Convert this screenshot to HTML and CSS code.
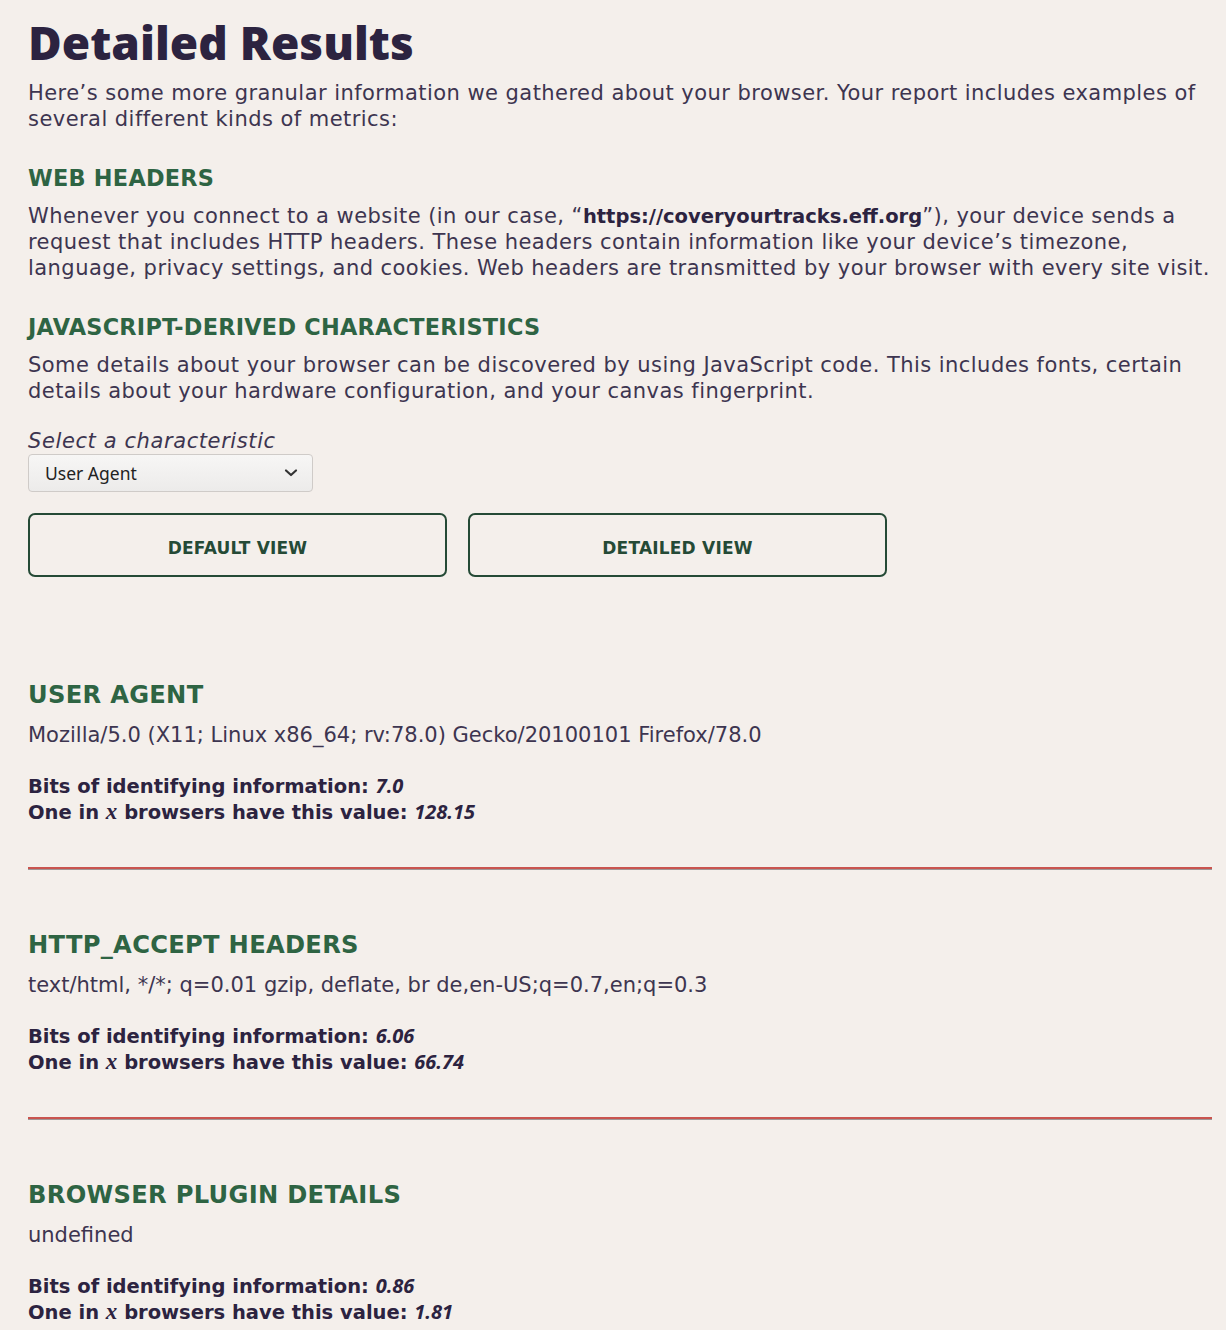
FILE: index.html
```html
<!DOCTYPE html>
<html lang="en">
<head>
<meta charset="utf-8">
<title>Detailed Results</title>
<link rel="stylesheet" href="styles.css">
</head>
<body>
<main class="page">
  <h1 class="title">Detailed Results</h1>
  <p class="text">Here’s some more granular information we gathered about your browser. Your report includes examples of several different kinds of metrics:</p>

  <h2 class="section-title">WEB HEADERS</h2>
  <p class="text">Whenever you connect to a website (in our case, “<strong class="url">https://coveryourtracks.eff.org</strong>”), your device sends a request that includes HTTP headers. These headers contain information like your device’s timezone, language, privacy settings, and cookies. Web headers are transmitted by your browser with every site visit.</p>

  <h2 class="section-title">JAVASCRIPT-DERIVED CHARACTERISTICS</h2>
  <p class="text">Some details about your browser can be discovered by using JavaScript code. This includes fonts, certain details about your hardware configuration, and your canvas fingerprint.</p>

  <label class="select-label" for="char">Select a characteristic</label>
  <div class="select-wrap">
    <select id="char" class="select">
      <option>User Agent</option>
      <option>HTTP_ACCEPT Headers</option>
      <option>Browser Plugin Details</option>
    </select>
    <svg class="chevron" width="14" height="10" viewBox="0 0 14 10"><path d="M2 2.5 L7 7 L12 2.5" fill="none" stroke="#333" stroke-width="2.2" stroke-linecap="round" stroke-linejoin="round"/></svg>
  </div>

  <div class="views">
    <button class="view-btn">DEFAULT VIEW</button>
    <button class="view-btn">DETAILED VIEW</button>
  </div>

  <section class="result">
    <h2 class="result-title">USER AGENT</h2>
    <p class="result-value">Mozilla/5.0 (X11; Linux x86_64; rv:78.0) Gecko/20100101 Firefox/78.0</p>
    <p class="bits">Bits of identifying information: <em>7.0</em><br>One in <span class="x">x</span> browsers have this value: <em>128.15</em></p>
  </section>
  <div class="divider"></div>

  <section class="result">
    <h2 class="result-title">HTTP_ACCEPT HEADERS</h2>
    <p class="result-value">text/html, */*; q=0.01 gzip, deflate, br de,en-US;q=0.7,en;q=0.3</p>
    <p class="bits">Bits of identifying information: <em>6.06</em><br>One in <span class="x">x</span> browsers have this value: <em>66.74</em></p>
  </section>
  <div class="divider"></div>

  <section class="result">
    <h2 class="result-title">BROWSER PLUGIN DETAILS</h2>
    <p class="result-value">undefined</p>
    <p class="bits">Bits of identifying information: <em>0.86</em><br>One in <span class="x">x</span> browsers have this value: <em>1.81</em></p>
  </section>
</main>
</body>
</html>
```

FILE: styles.css
```css
html, body {
  margin: 0;
  padding: 0;
  background: #f4efeb;
}

.page {
  width: 1184px;
  padding: 12px 14px 0 28px;
  font-family: "DejaVu Sans", "Open Sans", sans-serif;
  color: #3d3550;
}

.title {
  margin: 0;
  font-family: "Open Sans", sans-serif;
  font-weight: 800;
  font-size: 46px;
  line-height: 60px;
  color: #2c2340;
}

.text {
  margin: 8px 0 0;
  font-size: 21px;
  line-height: 26px;
  letter-spacing: 0.45px;
}

.url {
  font-weight: 700;
  font-size: 19.5px;
  line-height: 0;
  letter-spacing: 0;
  color: #2c2340;
}

.section-title {
  margin: 31px 0 0;
  font-size: 22.4px;
  line-height: 30px;
  font-weight: 700;
  letter-spacing: 0.25px;
  color: #2e6443;
}

.section-title + .text {
  margin-top: 10px;
}

.select-label {
  display: block;
  margin-top: 24px;
  font-size: 21px;
  line-height: 26px;
  font-style: italic;
  letter-spacing: 0.6px;
}

.select-wrap {
  position: relative;
  width: 285px;
  margin-top: 0;
}

.select {
  display: block;
  width: 285px;
  height: 38px;
  padding: 0 0 0 16px;
  appearance: none;
  -webkit-appearance: none;
  border: 1px solid #cfcbc8;
  border-radius: 4px;
  background: linear-gradient(#f7f6f5, #ecebea);
  font-family: "Noto Sans", sans-serif;
  font-size: 17.5px;
  color: #222;
}

.chevron {
  position: absolute;
  right: 15px;
  top: 14px;
  pointer-events: none;
}

.views {
  display: flex;
  gap: 21px;
  margin-top: 21px;
}

.view-btn {
  width: 419px;
  height: 64px;
  border: 2px solid #254a36;
  border-radius: 7px;
  background: transparent;
  font-family: "DejaVu Sans", sans-serif;
  font-weight: 700;
  font-size: 17px;
  letter-spacing: 0.2px;
  color: #254a36;
  padding: 6px 0 0;
}

.views + .result {
  margin-top: 103px;
}

.result-title {
  margin: 0;
  font-size: 24.2px;
  line-height: 30px;
  font-weight: 700;
  letter-spacing: 0.3px;
  color: #2e6443;
}

.result-value {
  margin: 12px 0 0;
  font-size: 21px;
  line-height: 26px;
}

.bits {
  margin: 26px 0 0;
  font-size: 19.5px;
  line-height: 26px;
  font-weight: 700;
  color: #2c2340;
}

.bits em {
  font-family: "Open Sans", sans-serif;
  font-style: italic;
  font-weight: 700;
  font-size: 20px;
  line-height: 0;
}

.x {
  font-family: "Liberation Serif", serif;
  font-style: italic;
  font-weight: 700;
  font-size: 23px;
  line-height: 0;
}

.divider {
  height: 2px;
  margin: 41px 0 60px;
  background: #c9544f;
  border-bottom: 1px solid #a09696;
}
```
